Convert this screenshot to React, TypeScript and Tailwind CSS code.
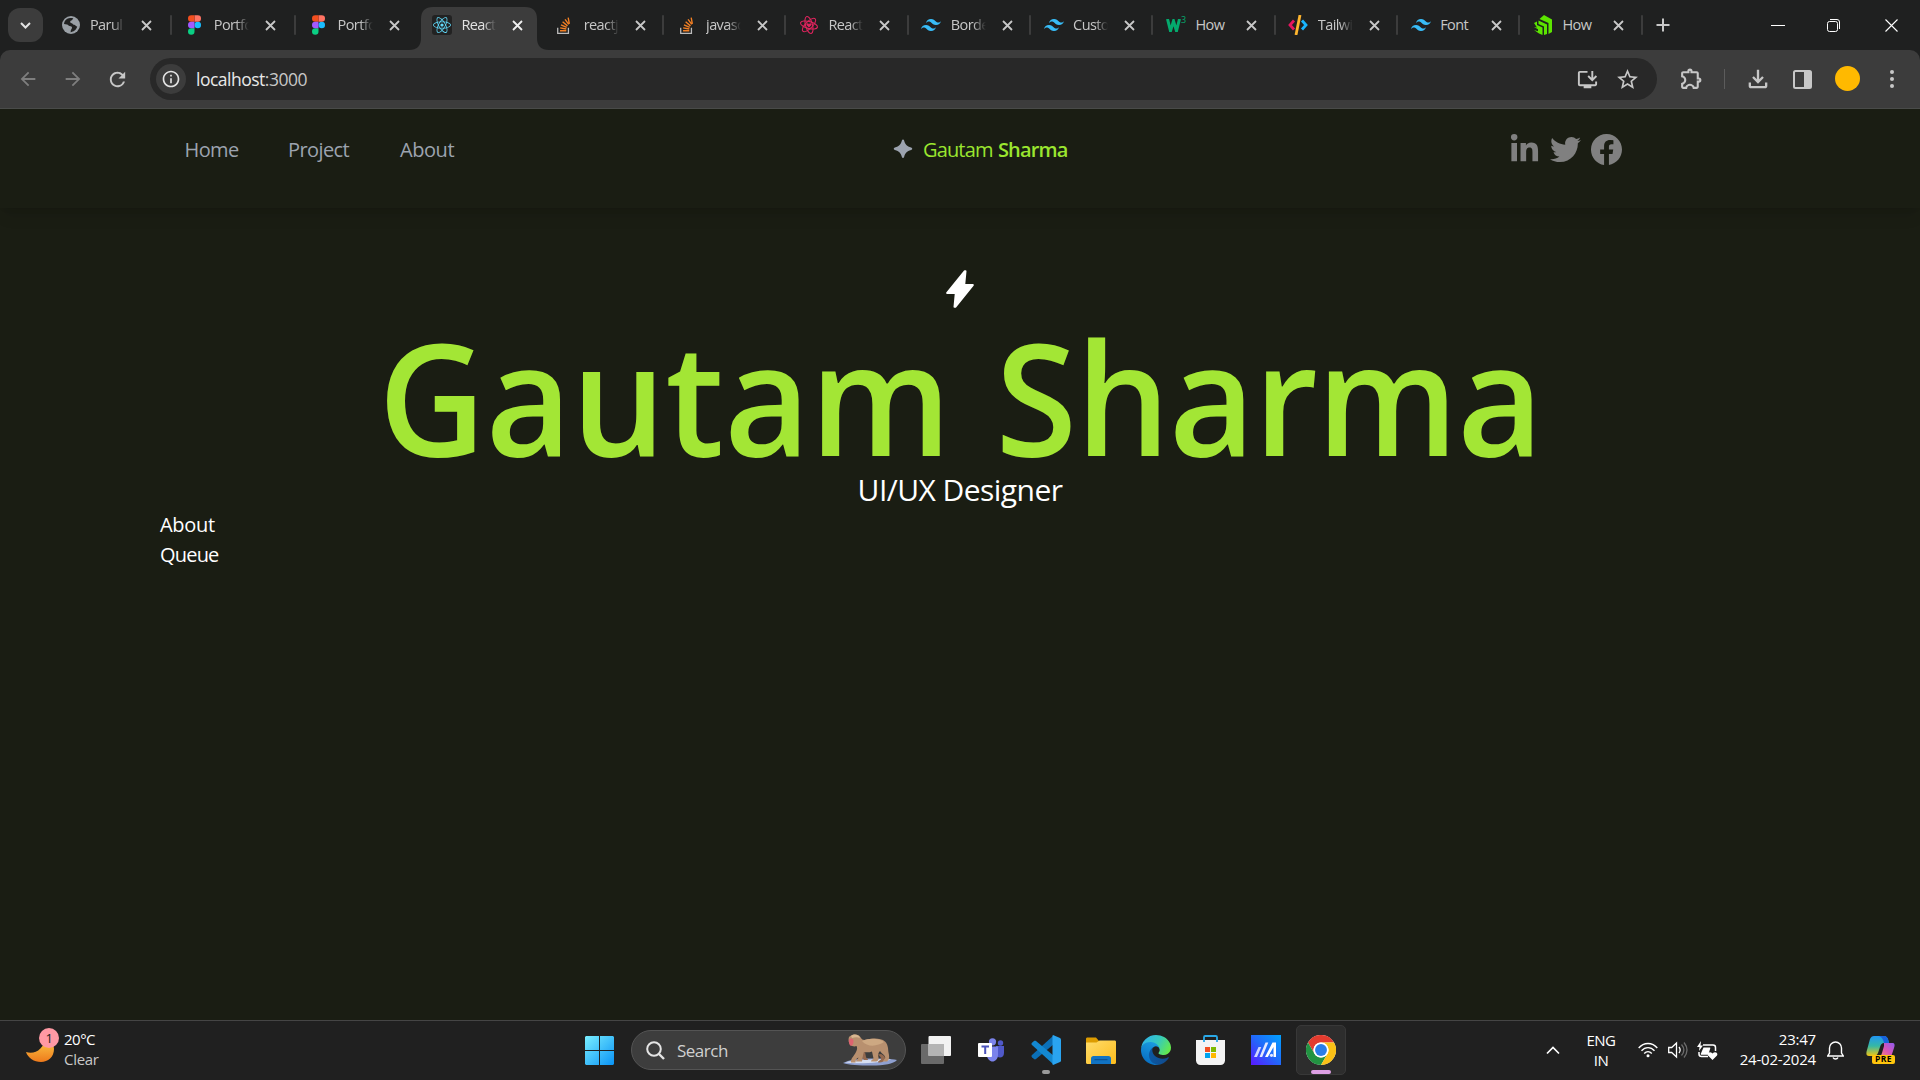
import React from "react";
import { FaLinkedinIn, FaTwitter, FaReact } from "react-icons/fa";
import { BsFacebook } from "react-icons/bs";
import { SiTailwindcss } from "react-icons/si";
import {
  MdArrowBack,
  MdArrowForward,
  MdRefresh,
  MdOutlineInfo,
  MdStarBorder,
  MdOutlineExtension,
  MdInstallDesktop,
  MdOutlineFileDownload,
} from "react-icons/md";

type TabInfo = { title: string; icon: React.ReactNode; active?: boolean; short?: boolean };

const Globe = () => (
  <svg className="size-[18px]" viewBox="0 0 18 18">
    <circle cx="9" cy="9" r="9" fill="#9aa0a6" />
    <path d="M8 2c-3 .2-5.600 2.400-6 6l3 .4c1.200.2 1.400 1.400 2.600 1.600 1.200.2 2.600.4 2.400 1.800-.2 1.600-1.400 1.800-1.400 4.400 2.800-.2 5.800-2.200 6.600-5.600-1.400-.2-1.600-1.600-3.200-1.800-1.600-.2-1-1.400-2.400-1.600-1.800-.2-1.800-2.200-.4-2.600 1.400-.4 1-1.600 2.200-2.200C10.400 2 9.200 1.900 8 2z" fill="#202121" />
  </svg>
);

const Figma = () => (
  <svg className="h-5 w-[13px]" viewBox="0 0 38 57">
    <path d="M19 28.500a9.500 9.500 0 1 1 19 0 9.500 9.500 0 0 1-19 0z" fill="#1abcfe" />
    <path d="M0 47.500A9.500 9.500 0 0 1 9.500 38H19v9.500a9.500 9.500 0 1 1-19 0z" fill="#0acf83" />
    <path d="M19 0v19h9.500a9.500 9.500 0 1 0 0-19H19z" fill="#ff7262" />
    <path d="M0 9.500A9.500 9.500 0 0 0 9.500 19H19V0H9.500A9.500 9.500 0 0 0 0 9.500z" fill="#f24e1e" />
    <path d="M0 28.500A9.500 9.500 0 0 0 9.500 38H19V19H9.500A9.500 9.500 0 0 0 0 28.500z" fill="#a259ff" />
  </svg>
);

const ReactTile = () => (
  <span className="flex size-5 items-center justify-center rounded-[3px] bg-[#222]">
    <FaReact className="size-[18px] text-[#61dafb]" />
  </span>
);

const StackOverflow = () => (
  <svg className="h-[17px] w-[14px]" viewBox="0 0 120 146">
    <path d="M6 92v48h92V92" fill="none" stroke="#bcbbbb" strokeWidth="11" />
    <g stroke="#f48024" strokeWidth="12">
      <path d="M26 118h54M27 93l53 10M34 67l49 23M48 41l42 35M69 20l32 44M96 6l10 54" />
    </g>
  </svg>
);

const RoseReact = () => (
  <svg className="size-5" viewBox="-12 -12 24 24" fill="none" stroke="#e0245e" strokeWidth="1.300">
    <g transform="rotate(15)">
      <ellipse rx="10.500" ry="4.200" />
      <ellipse rx="10.500" ry="4.200" transform="rotate(60)" />
      <ellipse rx="10.500" ry="4.200" transform="rotate(120)" />
    </g>
    <path d="M0 3-3 0c-1-2 2-3 3-1 1-2 4-1 3 1z" fill="#e0245e" stroke="none" />
  </svg>
);

const Tailwind = () => <SiTailwindcss className="size-5 text-[#38bdf8]" />;

const W3 = () => (
  <span className="flex size-5 items-start text-[#04aa6d]">
    <svg className="mt-[4px] h-[13px] w-[15px] shrink-0" viewBox="0 0 15 13" fill="none" stroke="currentColor" strokeWidth="3">
      <path d="M1.500 0l3 12L7.500 2l3 10 3-12" />
    </svg>
    <span className="text-[9px] leading-[10px] font-medium">3</span>
  </span>
);

const CodeIcon = () => (
  <svg className="size-5" viewBox="0 0 20 20" fill="none" strokeWidth="2.800">
    <path d="M6 5.500L2 10l4 4.500" stroke="#e6155f" />
    <path d="M14 5.500l4 4.500-4 4.500" stroke="#19b5fe" />
    <path d="M12 0L8 20" stroke="#ffb52e" />
  </svg>
);

const GreenBars = () => (
  <svg className="size-5" viewBox="0 0 20 20" fill="#5ce500">
    <path d="M6.500 4L11 0l8 4.500V17l-3.500 2V8z" />
    <path d="M5.500 5.500l8.500 4V19l-3 1v-8.500L5.500 9z" />
    <path d="M1 8l3-1.500V10l5.500 2.500V20L6 18.500 1 15l4 1.200v-2L1 12l3 .5z" />
  </svg>
);

const tabs: TabInfo[] = [
  { title: "Parul", icon: <Globe /> },
  { title: "Portfo", icon: <Figma /> },
  { title: "Portfo", icon: <Figma /> },
  { title: "React", icon: <ReactTile />, active: true },
  { title: "reactj", icon: <StackOverflow /> },
  { title: "javasc", icon: <StackOverflow /> },
  { title: "React", icon: <RoseReact /> },
  { title: "Borde", icon: <Tailwind /> },
  { title: "Custo", icon: <Tailwind /> },
  { title: "How", icon: <W3 />, short: true },
  { title: "Tailwi", icon: <CodeIcon /> },
  { title: "Font", icon: <Tailwind />, short: true },
  { title: "How", icon: <GreenBars />, short: true },
];

const Cross = () => (
  <svg className="size-[11px] shrink-0" viewBox="0 0 11 11" stroke="currentColor" strokeWidth="1.800">
    <path d="M1 1l9 9M10 1l-9 9" />
  </svg>
);

function Tab({ tab, divider, wide }: { tab: TabInfo; divider: boolean; wide: boolean }) {
  return (
    <div className={"relative flex h-[43px] shrink-0 items-center pb-[7px] " + (wide ? "w-[123.8px]" : "w-[122.350px]")}>
      {tab.active && (
        <svg className="absolute top-0 -left-[11px] h-[43px] w-[140px]" viewBox="0 0 140 43">
          <path d="M0 43c8 0 12-4 12-12V12C12 4 16 0 24 0h92c8 0 12 4 12 12v19c0 8 4 12 12 12z" fill="#3c3c3c" />
        </svg>
      )}
      <span className="relative ml-[11.500px] flex w-5 shrink-0 justify-center">{tab.icon}</span>
      <span
        className={
          "relative ml-[9.500px] w-[38px] shrink-0 overflow-hidden text-[14.500px] leading-5 tracking-[-0.6px] whitespace-nowrap " +
          (tab.active ? "text-[#e3e3e3] " : "text-[#c7c7c7] ") +
          (tab.short ? "" : "[mask-image:linear-gradient(to_right,black_58%,transparent_92%)]")
        }
      >
        {tab.title}
      </span>
      <span className={"relative ml-[13px] flex " + (tab.active ? "text-[#f0f0f0]" : "text-[#c7c7c7]")}>
        <Cross />
      </span>
      {divider && <span className="mr-px ml-auto h-5 w-[2px] rounded-full bg-[#3c3c3c]" />}
    </div>
  );
}

function TabStrip() {
  return (
    <div className="flex h-[50px] items-end bg-[#1f2020]">
      <div className="mb-[8px] ml-[8px] flex h-[34px] w-[35px] items-center justify-center rounded-[12px] bg-[#3c3c3c]">
        <svg className="h-[7px] w-[11px]" viewBox="0 0 11 7" fill="none" stroke="#e3e3e3" strokeWidth="2">
          <path d="M1 1l4.500 4.500L10 1" />
        </svg>
      </div>
      <div className="ml-[6px] flex">
        {tabs.map((t, i) => (
          <Tab key={i} tab={t} divider={i !== 2 && i !== 3} wide={i < 3} />
        ))}
      </div>
      <div className="ml-[12.500px] flex h-[50px] flex-1 items-center text-white">
        <svg className="size-[14px]" viewBox="0 0 14 14" stroke="#c7c7c7" strokeWidth="2">
          <path d="M7 0.500v13M0.500 7h13" />
        </svg>
        <svg className="ml-[100.500px] h-[13px] w-[14px]" viewBox="0 0 14 13" stroke="currentColor" strokeWidth="1">
          <path d="M0 6.500h14" />
        </svg>
        <svg className="ml-[42px] size-[13px]" viewBox="0 0 13 13" fill="none" stroke="currentColor">
          <rect x="0.500" y="2.500" width="10" height="10" rx="2" />
          <path d="M3 .5h7a2.500 2.500 0 0 1 2.500 2.500v7" />
        </svg>
        <svg className="ml-[45px] size-[13px]" viewBox="0 0 13 13" stroke="currentColor" strokeWidth="1.100">
          <path d="M.5.5l12 12M12.500.5l-12 12" />
        </svg>
      </div>
    </div>
  );
}

function Toolbar() {
  return (
    <div className="bg-[#1f2020]">
      <div className="flex h-[59px] items-center rounded-t-[10px] border-b border-[#4a4c4a] bg-[#3c3c3c] text-[#c7c7c7]">
        <MdArrowBack className="ml-[16.500px] size-[22px] text-[#7e7e7e]" />
        <MdArrowForward className="ml-[23px] size-[22px] text-[#7e7e7e]" />
        <MdRefresh className="ml-[22.500px] size-[23px]" />
        <div className="ml-[21px] flex h-[42px] w-[1507px] items-center rounded-full bg-[#282828]">
          <span className="ml-[6px] flex size-[30px] items-center justify-center rounded-full bg-[#3c3c3c]">
            <MdOutlineInfo className="size-[20px] text-[#e3e3e3]" />
          </span>
          <span className="ml-[10px] text-[17.500px] leading-6 tracking-[-0.5px] text-[#c7c7c7]">
            <span className="text-[#e8e8e8]">localhost</span>:3000
          </span>
          <MdInstallDesktop className="mr-0 ml-auto size-[23px]" />
          <MdStarBorder className="mr-[17px] ml-[16px] size-[25px]" />
        </div>
        <MdOutlineExtension className="-mt-[2px] ml-[22px] size-[25px]" />
        <span className="ml-[20px] h-5 w-px bg-[#5c5c5c]" />
        <MdOutlineFileDownload className="ml-[18.500px] size-[28px]" />
        <svg className="ml-[21.500px] h-[19px] w-[19px]" viewBox="0 0 19 19">
          <rect x="1" y="1" width="17" height="17" rx="1.500" fill="none" stroke="currentColor" strokeWidth="2" />
          <path d="M11 1h7v17h-7z" fill="currentColor" />
        </svg>
        <span className="-mt-px ml-[23px] size-[25px] rounded-full bg-[#ffb900]" />
        <svg className="ml-[30px] h-[18px] w-1" viewBox="0 0 4 18" fill="currentColor">
          <circle cx="2" cy="2" r="2" />
          <circle cx="2" cy="9" r="2" />
          <circle cx="2" cy="16" r="2" />
        </svg>
      </div>
    </div>
  );
}

function Page() {
  return (
    <div className="h-[911px] bg-[#1a1d13] text-[20px] leading-[30px] text-white">
      <nav className="flex h-[99px] items-start pt-[26px] shadow-[0_10px_15px_-3px_rgba(0,0,0,0.1),0_4px_6px_-4px_rgba(0,0,0,0.1)]">
        <div className="flex w-[893px] pl-[184.500px] tracking-[-0.6px] text-[#9ca3af]">
          <span className="w-[103.500px]">Home</span>
          <span className="w-[112px]">Project</span>
          <span className="tracking-[-0.450px]">About</span>
        </div>
        <div className="flex w-[616px] text-[#9ae62f]">
          <svg className="mt-[4px] size-5" viewBox="0 0 20 20" fill="#9ca3af">
            <path d="M10 .5c.6 0 .9.4 1.100 1 .9 3.800 2.800 5.900 7 7 .7.2 1.100.5 1.100 1.200s-.4 1-1.100 1.200c-4.200 1.100-6.100 3.200-7 7-.2.700-.5 1.100-1.100 1.100s-.9-.4-1.100-1.100c-.9-3.800-2.800-5.900-7-7-.7-.2-1.100-.5-1.100-1.200s.4-1 1.100-1.200c4.200-1.100 6.100-3.200 7-7 .2-.6.5-1 1.100-1z" />
          </svg>
          <span className="ml-[10px] tracking-[-0.850px] [word-spacing:1px]">
            Gautam <b className="font-semibold">Sharma</b>
          </span>
        </div>
        <div className="-mt-px flex gap-[10px] text-[#808080]">
          <FaLinkedinIn className="size-[31px]" />
          <FaTwitter className="size-[31px]" />
          <BsFacebook className="size-[31px]" />
        </div>
      </nav>
      <div className="mt-[62px] flex flex-col items-center">
        <svg className="h-[38px] w-[28px]" viewBox="0 0 28 38" fill="currentColor" stroke="currentColor" strokeWidth="2" strokeLinejoin="round">
          <path d="M18.800 1.200L1.200 23h8.600L8.500 36.800h.8L26.800 15h-8.600l1.300-13.800z" />
        </svg>
        <h1 className="mt-[13px] scale-x-[0.949] text-[156px] leading-[150px] font-semibold whitespace-nowrap text-[#a3e635] [word-spacing:6px]">
          Gautam <span className="tracking-[-1px]">Sharma</span>
        </h1>
        <p className="-mt-[4px] text-[30px] leading-[45px] tracking-[-0.550px]">UI/UX Designer</p>
      </div>
      <div className="-mt-[2px] ml-[160px] tracking-[-0.3px]">
        <p>About</p>
        <p className="tracking-[-0.8px]">Queue</p>
      </div>
    </div>
  );
}

const WindowsLogo = () => (
  <svg className="h-[29px] w-[29px]" viewBox="0 0 29 29">
    <defs>
      <linearGradient id="win" x1="0" y1="0" x2="29" y2="29" gradientUnits="userSpaceOnUse">
        <stop stopColor="#79eeff" />
        <stop offset="1" stopColor="#0a93f5" />
      </linearGradient>
    </defs>
    <path d="M1 0h13v14H0V1zM15 0h13l1 1v13H15zM0 15h14v14H1l-1-1zM15 15h14v13l-1 1H15z" fill="url(#win)" />
  </svg>
);

const Monkey = () => (
  <svg className="h-[32px] w-[54px]" viewBox="0 0 54 32">
    <path d="M0 29c6-3 14-4.500 26-4.500s22 0 28 1.500c-4 4-12 5.500-26 5.500C16 31.500 6 31 0 29z" fill="#8fa0d0" />
    <path d="M2 28.500c12-3 32-3.500 46-3-8 3-32 5-46 3z" fill="#d6def2" />
    <path d="M38 20c4 2 5 4 3 7-1 1.500-4 1.500-6 1.500 0-2 2-2 3-3 .6-2-1-3-3-5z" fill="#94694f" />
    <path d="M18 19c1 3 1 5 3 7h4c0-1.500-2-2-2-3l-1-5z" fill="#94694f" />
    <path d="M6 3C9-.5 16-.5 18 4c1 2 3 2.500 6 1.500 6-1.500 14-1.500 18 2 3.500 3.500 3 8 3.500 11 1 4 1 7-1.500 9h-4c0-1.500 2-2 2.200-3.500.2-3-3.200-4-5.200-7-2 2-2 4-1.500 6.500.5 2-.5 4-2.500 4h-5c0-1.500 2-2 2.500-3l-1.500-7c-3 1-5 1-8 .5-1.500 3-1 6-2 9.500h-6c0-1.500 2-2 2.500-4-2 1-3 2-3 5H8c-.500-3 1.500-5 3.500-8 2-3 3.500-6 2-8.500C9 14 4 9 6 3z" fill="#b8906f" />
    <path d="M19 7c7-3 17-3 22 1-6 4-16 6-22-1z" fill="#cda882" />
    <path d="M8 2c3-2.500 8-1.500 9 2-2-1-5-1-8 0z" fill="#d8b791" />
    <path d="M6 5.500c2-2 4.500-1 4.500 1.500s-1 5-2.500 5c-2-1-2.500-4-2-6.500z" fill="#dc6470" />
  </svg>
);

const TaskView = () => (
  <svg className="h-[28px] w-[30px]" viewBox="0 0 30 28">
    <rect x="0" y="8" width="23" height="20" rx="1" fill="#6a6a6a" />
    <rect x="7.500" y="0" width="22.500" height="20" rx="1" fill="#f2f2f2" />
    <path d="M7.500 8H23v12H7.500z" fill="#b4b4b4" />
  </svg>
);

const Teams = () => (
  <svg className="h-[24px] w-[26px]" viewBox="0 0 26 24">
    <circle cx="22.500" cy="5" r="2.700" fill="#5059c9" />
    <path d="M18 8h8v7c0 3-2 4.500-4 4.500S18 18 18 15z" fill="#5059c9" />
    <circle cx="14.500" cy="3.800" r="3.600" fill="#7b83eb" />
    <path d="M9 8.500h11V17c0 4-3 6.500-5.500 6.500S9 21 9 17z" fill="#7b83eb" />
    <rect x="0" y="5" width="14" height="14" rx="1" fill="#fff" />
    <path d="M3.500 8.500h7.500M7.200 8.500V16" stroke="#4b53bc" strokeWidth="2" />
  </svg>
);

const VSCode = () => (
  <svg className="size-[30px]" viewBox="0 0 30 30">
    <path d="M22 1L1 20c-.7.700-.7 1.500 0 2.200L3 24c.6.500 1.300.5 2 0L23 9z" fill="#0b70b8" />
    <path d="M22 29L1 10c-.7-.7-.7-1.500 0-2.200L3 6c.6-.5 1.300-.5 2 0L23 21z" fill="#1388d1" />
    <path d="M22 0l7 3c.7.400 1 .9 1 1.600v20.800c0 .7-.3 1.200-1 1.600l-7 3c-.3-.2-.5-.5-.5-1V1c0-.5.2-.8.500-1z" fill="#2aa4f0" />
  </svg>
);

const Folder = () => (
  <svg className="h-[27px] w-[30px]" viewBox="0 0 30 27">
    <defs>
      <linearGradient id="fold" x1="0" y1="0" x2="1" y2="1">
        <stop stopColor="#ffdc6b" />
        <stop offset="1" stopColor="#fcbc1c" />
      </linearGradient>
    </defs>
    <path d="M0 2C0 1 .6.500 1.500.5H10L13 4h15v6H0z" fill="#dd9c00" />
    <path d="M0 5.500h10.500L13.500 3.500H28.500c1 0 1.500.5 1.500 1.500v20.500c0 .9-.6 1.500-1.500 1.500h-27C.6 27 0 26.400 0 25.500z" fill="url(#fold)" />
    <path d="M5 27v-5.500c0-1.500 1-2.500 2.500-2.500h15c1.500 0 2.500 1 2.500 2.500V27z" fill="#1173c3" />
    <path d="M8.500 22.700h13" stroke="#0a4b8c" strokeWidth="1" />
  </svg>
);

const Edge = () => (
  <svg className="size-[30px]" viewBox="0 0 256 256">
    <defs>
      <linearGradient id="e1" x1="0" y1="0" x2="1" y2="0">
        <stop stopColor="#0c59a4" />
        <stop offset="1" stopColor="#114a8b" />
      </linearGradient>
      <linearGradient id="e2" x1="0.600" y1="0" x2="0.200" y2="1">
        <stop stopColor="#1b9de2" />
        <stop offset="1" stopColor="#0669bd" />
      </linearGradient>
      <linearGradient id="e3" x1="0" y1="0.300" x2="1" y2="0.700">
        <stop stopColor="#2fb2ea" />
        <stop offset="0.500" stopColor="#36c9bd" />
        <stop offset="1" stopColor="#66eb45" />
      </linearGradient>
    </defs>
    <path d="M231 190.500c-3.400 1.800-6.900 3.400-10.500 4.700a101 101 0 0 1-35.800 6.500c-47.200 0-88.400-32.500-88.400-74.200.1-11.400 6.400-21.900 16.400-27.300-42.800 1.800-53.800 46.400-53.800 72.500 0 73.900 68.100 81.400 82.800 81.400 7.900 0 19.800-2.300 27-4.600l1.300-.4a128 128 0 0 0 66.600-52.800 4 4 0 0 0-5.600-5.800z" fill="url(#e1)" />
    <path d="M105.700 241.400a79 79 0 0 1-22.700-21.300 80.700 80.700 0 0 1 29.500-120c3.200-1.500 8.500-4.100 15.600-4a32.400 32.400 0 0 1 25.700 13 31.900 31.900 0 0 1 6.300 18.700c0-.2 24.500-79.600-80-79.600C36.200 48.200.100 90 .1 126.600c-.1 19.300 4 38.500 12.200 56a128 128 0 0 0 156.400 67 75.500 75.500 0 0 1-62.800-8z" fill="url(#e2)" />
    <path d="M152.300 148.900c-.9 1-3.400 2.500-3.400 5.600 0 2.600 1.700 5.200 4.800 7.300 14.300 10 41.400 8.600 41.500 8.600 10.700 0 21.100-2.900 30.300-8.300A61.400 61.400 0 0 0 256 109.100c.3-22.400-8-37.300-11.300-43.900C223.500 23.900 177.700 0 128 0A128 128 0 0 0 0 126.200c.5-36.500 36.800-66 80-66 3.500 0 23.500.3 42 10.100 16.300 8.600 24.900 18.900 30.800 29.200 6.200 10.700 7.300 24.100 7.300 29.500 0 5.300-2.700 13.300-7.800 19.900z" fill="url(#e3)" />
  </svg>
);

const Store = () => (
  <svg className="h-[30px] w-[29px]" viewBox="0 0 29 30">
    <path d="M8 7V2.200C8 1.400 8.400 1 9.200 1h10.600c.8 0 1.200.4 1.200 1.200V7" fill="none" stroke="#2aa9e8" strokeWidth="1.800" />
    <path d="M0 5h29v20.500c0 2.500-2 4.500-4.500 4.500h-20C2 30 0 28 0 25.500z" fill="#f4f4f4" />
    <path d="M9 12h5v5H9z" fill="#f25022" />
    <path d="M15 12h5v5h-5z" fill="#7fba00" />
    <path d="M9 18h5v5H9z" fill="#00a4ef" />
    <path d="M15 18h5v5h-5z" fill="#ffb900" />
    <path d="M8 5v2M21 5v2" stroke="#2aa9e8" strokeWidth="1.800" />
  </svg>
);

const MyAsus = () => (
  <svg className="size-[30px]" viewBox="0 0 30 30">
    <defs>
      <linearGradient id="asus" x1="0" y1="1" x2="1" y2="0">
        <stop stopColor="#5a17ff" />
        <stop offset="0.500" stopColor="#2268fa" />
        <stop offset="1" stopColor="#00a2ff" />
      </linearGradient>
    </defs>
    <path d="M0 0h30v30H0z" fill="url(#asus)" />
    <path d="M3 22L7.500 12h2.800L6 22z" fill="#cfd6ff" />
    <path d="M8.500 22L14.500 7.500h2.800L11.200 22z" fill="#e4e8ff" />
    <path d="M14 22L21.500 7.500H25V22h-2.500V12L16.800 22z" fill="#fff" />
    <circle cx="20.500" cy="20.300" r="1.600" fill="#e4e8ff" />
  </svg>
);

const Chrome = () => (
  <svg className="size-[30px]" viewBox="0 0 48 48">
    <circle cx="24" cy="24" r="24" fill="#fff" />
    <path d="M3.200 12A24 24 0 0 1 44.800 12H24a12 12 0 0 0-10.400 18z" fill="#e33b2e" />
    <path d="M3.200 12A24 24 0 0 0 24 48l10.400-18a12 12 0 0 1-20.800 0z" fill="#229342" />
    <path d="M44.800 12A24 24 0 0 1 24 48l10.400-18A12 12 0 0 0 24 12z" fill="#fbc116" />
    <circle cx="24" cy="24" r="12" fill="#fff" />
    <circle cx="24" cy="24" r="9.500" fill="#2a7de9" />
  </svg>
);

const Copilot = () => (
  <svg className="h-[22px] w-[29px]" viewBox="0 0 29 22">
    <defs>
      <linearGradient id="c1" x1="0" y1="0" x2="0" y2="1">
        <stop stopColor="#2196f3" />
        <stop offset="0.500" stopColor="#35b8a5" />
        <stop offset="1" stopColor="#f2c511" />
      </linearGradient>
      <linearGradient id="c2" x1="1" y1="0" x2="0" y2="1">
        <stop stopColor="#8f5bf0" />
        <stop offset="0.500" stopColor="#dc55b4" />
        <stop offset="1" stopColor="#ff9a62" />
      </linearGradient>
    </defs>
    <path d="M8 0h10c3 0 4 2 5 7h-5c-2 0-3 1-4 4l-2 6c-1 2-2 3-4 3H3c-3 0-3-3-2-6L4 3c1-2 2-3 4-3z" fill="url(#c1)" />
    <path d="M13 0h5c3 0 4 2 5 7h-5c-1-4-2-6-5-7z" fill="#1762dc" />
    <path d="M18 7h8c3 0 3 2 2 5l-2 6c-1 3-2 4-5 4h-9c2 0 3-2 4-5l2-7z" fill="url(#c2)" />
  </svg>
);

function Taskbar() {
  return (
    <div className="flex h-[60px] items-center border-t border-[#454545] bg-[#202020] pb-px text-[15px] leading-5 tracking-[-0.5px] text-white">
      <div className="flex w-[585px] items-center">
        <div className="relative ml-[26px] h-[44px] w-[33px]">
          <svg className="absolute top-[7px] left-0 h-[28px] w-[28px]" viewBox="0 0 28 28">
            <defs>
              <linearGradient id="moon" x1="0" y1="0" x2="0" y2="1">
                <stop stopColor="#ffd24a" />
                <stop offset="1" stopColor="#ee7a1c" />
              </linearGradient>
            </defs>
            <path d="M20 2c5 3 8 8 8 12 0 8-6 13-13 13C8 27 2 23 0 17c9 3 18-3 20-15z" fill="url(#moon)" />
          </svg>
          <span className="absolute top-0 left-[13px] flex size-5 items-center justify-center rounded-full bg-[#ff99a4] text-[13px] text-[#202020]">
            1
          </span>
        </div>
        <div className="-mt-[3px] ml-[5px]">
          <div>20°C</div>
          <div className="tracking-[-0.3px] text-[#c8c8c8]">Clear</div>
        </div>
      </div>
      <WindowsLogo />
      <div className="ml-[17px] flex h-[40px] w-[275px] items-center rounded-full border border-[#545454] bg-[#3d3d3d]">
        <svg className="ml-[14px] size-[19px]" viewBox="0 0 19 19" fill="none" stroke="#e4e4e4" strokeWidth="2">
          <circle cx="8" cy="8" r="6.800" />
          <path d="M13 13l5 5" strokeWidth="2.400" />
        </svg>
        <span className="mt-px ml-[12px] w-[166px] text-[17px] tracking-[-0.5px] text-[#d0d0d0]">Search</span>
        <Monkey />
      </div>
      <div className="ml-[15px]">
        <TaskView />
      </div>
      <div className="ml-[27px]">
        <Teams />
      </div>
      <div className="relative ml-[27px]">
        <VSCode />
        <span className="absolute -bottom-[9px] left-[11px] h-1 w-2 rounded-full bg-[#9a9a9a]" />
      </div>
      <div className="ml-[25px]">
        <Folder />
      </div>
      <div className="ml-[25px]">
        <Edge />
      </div>
      <div className="ml-[25px]">
        <Store />
      </div>
      <div className="ml-[26px]">
        <MyAsus />
      </div>
      <div className="relative ml-[15px] flex size-[50px] items-center justify-center rounded-[5px] border border-[#383838] bg-[#2d2d2d]">
        <Chrome />
        <span className="absolute bottom-0 left-[14px] h-1 w-5 rounded-full bg-[#dd9fe4]" />
      </div>
      <svg className="ml-[200px] h-[9px] w-[14px]" viewBox="0 0 14 9" fill="none" stroke="#fff" strokeWidth="1.700">
        <path d="M1 7.500l6-6 6 6" />
      </svg>
      <div className="ml-[22px] w-[38px] text-center">
        <div>ENG</div>
        <div>IN</div>
      </div>
      <svg className="ml-[18px] h-[16px] w-[20px]" viewBox="0 0 20 16" fill="none" stroke="#fff" strokeWidth="1.400">
        <path d="M.7 6c5-6 13.600-6 18.600 0M3.500 8.800c3.700-4.200 9.300-4.200 13 0M6.200 11.500c2.300-2.500 5.300-2.500 7.600 0" />
        <circle cx="10" cy="13.700" r="1.500" fill="#fff" stroke="none" />
      </svg>
      <svg className="ml-[10px] h-[18px] w-[20px]" viewBox="0 0 20 18" fill="none" stroke="#fff" strokeWidth="1.300">
        <path d="M.7 6.500h3L8.500 2v14l-4.800-4.500h-3z" />
        <path d="M11 6c1.500 2 1.500 4 0 6" />
        <path d="M13.500 3.500c3 3.500 3 7.500 0 11M16 1.500c4 5 4 10 0 15" stroke="#6b6b6b" />
      </svg>
      <svg className="ml-[9px] h-[19px] w-[21px]" viewBox="0 0 21 19">
        <path d="M6 4h10c1.500 0 2.500 1 2.500 2.500V10M11 15.500H4.500C3 15.500 2 14.500 2 13v-2" fill="none" stroke="#fff" strokeWidth="1.500" />
        <path d="M6.500 6.500h6c.8 0 1 .4.700 1L11.500 13c-.2.500-.5.700-1 .7H4.600c-.8 0-1-.4-.8-1z" fill="#fff" />
        <path d="M4 0L0 6h2.500L2 10l4-5.500H3.500z" fill="#fff" />
        <path d="M15.500 19l-4.500-4.500c-1.500-2.500 2-4.500 4.500-2 2.500-2.500 6-.5 4.500 2z" fill="#fff" />
      </svg>
      <div className="-mt-[3px] w-[98px] text-right tracking-[-0.2px]">
        <div>23:47</div>
        <div>24-02-2024</div>
      </div>
      <svg className="ml-[11px] h-[19px] w-[17px]" viewBox="0 0 17 19" fill="none" stroke="#fff" strokeWidth="1.400">
        <path d="M2.500 12V7a6 6 0 0 1 12 0v5l1.800 3H.7zM6 16.500c1 2 4 2 5 0" />
      </svg>
      <div className="relative ml-[22px] h-[28px] w-[29px]">
        <Copilot />
        <span className="absolute right-0 bottom-0 flex h-[9px] w-[23px] items-center justify-center rounded-[2px] bg-[#ffc50d] text-[8.500px] leading-none font-bold tracking-[0.4px] text-black">
          PRE
        </span>
      </div>
    </div>
  );
}

export default function App() {
  return (
    <div className="h-[1080px] w-[1920px] overflow-hidden bg-[#1a1d13] font-['Open_Sans','Noto_Sans',sans-serif]">
      <TabStrip />
      <Toolbar />
      <Page />
      <Taskbar />
    </div>
  );
}
